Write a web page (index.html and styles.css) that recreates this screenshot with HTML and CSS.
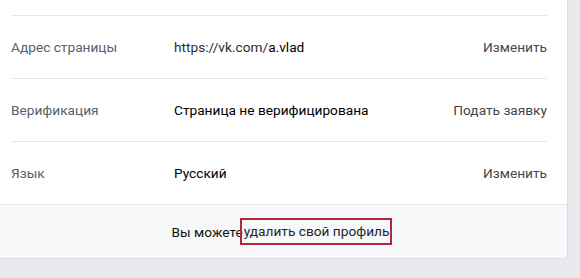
FILE: index.html
```html
<!DOCTYPE html>
<html lang="ru">
<head>
<meta charset="utf-8">
<link rel="stylesheet" href="styles.css">
</head>
<body>
<div class="card">
  <div class="rows">
    <div class="top"></div>
    <div class="row">
      <div class="label">Адрес страницы</div>
      <div class="value">https://vk.com/<span class="strong">a.vlad</span></div>
      <div class="action">Изменить</div>
    </div>
    <div class="row">
      <div class="label">Верификация</div>
      <div class="value strong">Страница не верифицирована</div>
      <div class="action">Подать заявку</div>
    </div>
    <div class="row last">
      <div class="label">Язык</div>
      <div class="value strong">Русский</div>
      <div class="action">Изменить</div>
    </div>
  </div>
  <div class="footer">
    <span>Вы можете</span> <span class="del">удалить свой профиль</span>
  </div>
</div>
</body>
</html>
```
FILE: styles.css
```css
html, body {
  margin: 0;
  padding: 0;
}
body {
  background: #e9eaed;
  font-family: Roboto, "Noto Sans", "Liberation Sans", sans-serif;
  font-size: 13.7px;
  color: #222;
  height: 278px;
}
.card {
  width: 567px;
  background: #fff;
  border-right: 1px solid #dcdee2;
  border-bottom: 1px solid #dcdee2;
  border-bottom-right-radius: 4px;
  overflow: hidden;
}
.rows {
  padding: 0 20px 0 11px;
}
.top {
  height: 15px;
  border-bottom: 1px solid #e4e6ea;
}
.row {
  display: flex;
  align-items: center;
  height: 62px;
  border-bottom: 1px solid #e4e6ea;
}
.row.last {
  border-bottom: none;
}
.label {
  width: 163px;
  color: #5a6068;
}
.value {
  flex: 1;
  color: #2a2d33;
}
.strong {
  color: #000;
}
.action {
  color: #41464d;
}
.footer {
  height: 53px;
  border-top: 1px solid #e4e6ea;
  background: #f7f8fa;
  display: flex;
  align-items: center;
  justify-content: center;
  padding-right: 3px;
  color: #111;
}
.del {
  display: inline-block;
  border: 2px solid #b02a3c;
  padding: 3px 1px 4px 2px;
  margin-left: -3px;
  color: #22262c;
}
```
